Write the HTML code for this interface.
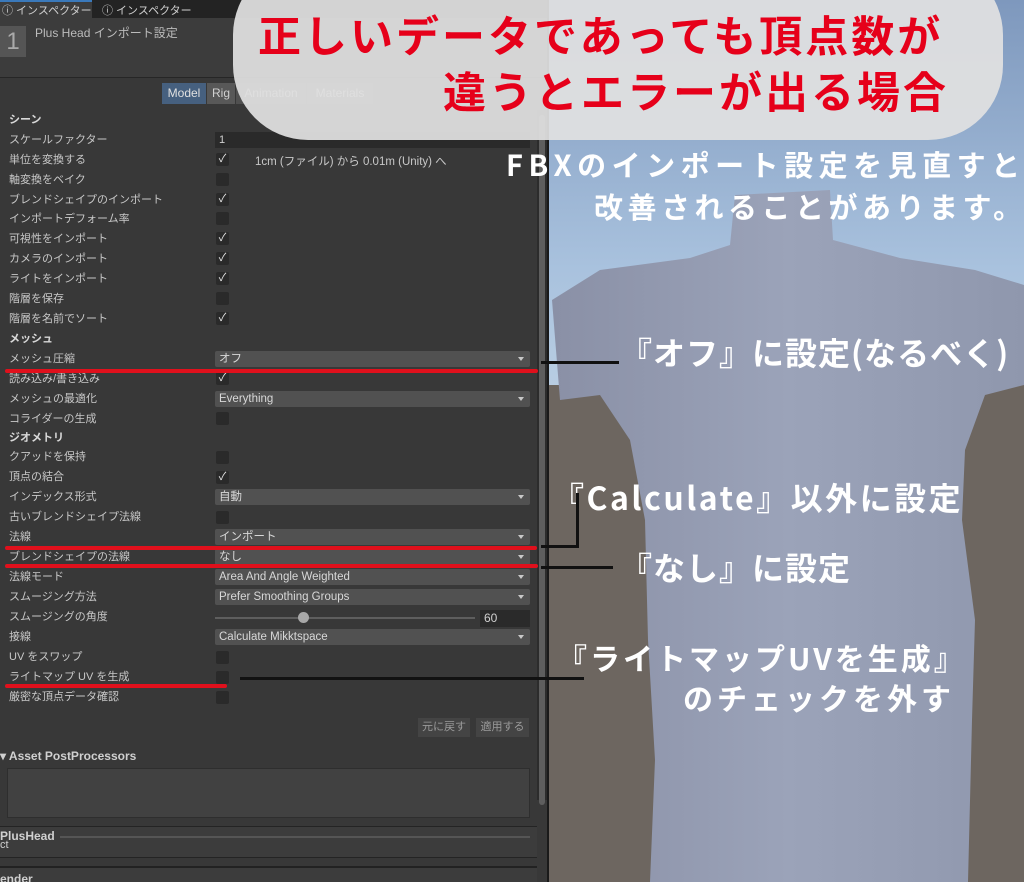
<!DOCTYPE html>
<html><head><meta charset="utf-8">
<style>
*{margin:0;padding:0;box-sizing:border-box}
body{width:1024px;height:882px;overflow:hidden;position:relative;background:#6d6660;font-family:"Liberation Sans","Noto Sans CJK JP",sans-serif}
.a{position:absolute}
#panel{left:0;top:0;width:548px;height:882px;background:#383838;overflow:hidden}
.lb{position:absolute;left:9px;font-size:11px;color:#c8c8c8;line-height:14px;white-space:nowrap}
.b{font-weight:bold;color:#d8d8d8}
.cb{position:absolute;left:216px;width:13px;height:13px;background:#2a2a2a;border-radius:2px;color:#e8e8e8;font-size:11px;line-height:13px;text-align:center}
.dd{position:absolute;left:215px;width:315px;height:16px;background:#515151;border-radius:2px;color:#d8d8d8;font-size:11.5px;line-height:16px;padding-left:4px}
.dd:after{content:"";position:absolute;right:6px;top:6px;border-left:3.5px solid transparent;border-right:3.5px solid transparent;border-top:4px solid #c8c8c8}
.red{position:absolute;height:4px;background:#e0101c;border-radius:2px}
.blk{position:absolute;background:#111}
.wt{position:absolute;color:#fff;font-family:"Noto Sans CJK JP",sans-serif;font-weight:bold;white-space:nowrap;letter-spacing:2px}
</style></head><body>

<svg class="a" style="left:0;top:0" width="1024" height="882">
<defs>
<linearGradient id="sky" x1="0" y1="0" x2="0" y2="1">
<stop offset="0" stop-color="#7e98bd"/><stop offset="0.7" stop-color="#a9c2de"/><stop offset="1" stop-color="#b8cde2"/></linearGradient>
<linearGradient id="bd" x1="0" y1="0" x2="1" y2="0">
<stop offset="0" stop-color="#8a90a6"/><stop offset="0.5" stop-color="#9ba3b9"/><stop offset="1" stop-color="#8f97ad"/></linearGradient>
</defs>
<rect x="548" y="0" width="476" height="385" fill="url(#sky)"/>
<rect x="548" y="385" width="476" height="497" fill="#6d6660"/>
<path d="M735 195 L830 190 L833 240 L900 258 L975 270 L1024 285 L1024 385 L985 395 L965 450 L962 520 L975 620 L972 720 L968 882 L650 882 L655 760 L648 640 L645 520 L630 440 L600 395 L560 400 L552 300 L600 270 L690 258 L730 245 Z" fill="url(#bd)"/>
</svg>

<div id="panel" class="a">
 <div class="a" style="left:0;top:0;width:548px;height:18px;background:#232323"></div>
 <div class="a" style="left:0;top:0;width:92px;height:18px;background:#3c3c3c;border-top:2px solid #3a79bb"></div>
 <div class="a" style="left:2px;top:2px;font-size:11px;color:#d0d0d0">ⓘ インスペクター</div>
 <div class="a" style="left:102px;top:2px;font-size:11px;color:#d0d0d0">ⓘ インスペクター</div>
 <div class="a" style="left:0;top:18px;width:548px;height:60px;background:#3c3c3c;border-bottom:1px solid #262626"></div>
 <div class="a" style="left:0;top:26px;width:26px;height:31px;background:#555;color:#aaa;font-size:24px;text-align:center;line-height:31px">1</div>
 <div class="a" style="left:35px;top:24px;font-size:12px;color:#bcbcbc">Plus Head インポート設定</div>
 <div class="a" style="left:162px;top:83px;width:44px;height:21px;background:#46607f;color:#e0e0e0;font-size:12px;line-height:21px;text-align:center">Model</div>
 <div class="a" style="left:207px;top:83px;width:28px;height:21px;background:#585858;color:#d0d0d0;font-size:12px;line-height:21px;text-align:center">Rig</div>
 <div class="a" style="left:236px;top:83px;width:70px;height:21px;background:#505050;color:#c0c0c0;font-size:12px;line-height:21px;text-align:center">Animation</div>
 <div class="a" style="left:307px;top:83px;width:66px;height:21px;background:#505050;color:#c0c0c0;font-size:12px;line-height:21px;text-align:center">Materials</div>

 <div class="lb b" style="top:113px">シーン</div>
 <div class="lb" style="top:133px">スケールファクター</div>
 <div class="a" style="left:215px;top:132px;width:315px;height:16px;background:#2a2a2a;color:#d0d0d0;font-size:11px;line-height:16px;padding-left:4px">1</div>
 <div class="lb" style="top:153px">単位を変換する</div><div class="cb" style="top:153px">✓</div>
 <div class="a" style="left:255px;top:153px;font-size:11.5px;color:#c8c8c8">1cm (ファイル) から 0.01m (Unity) へ</div>
 <div class="lb" style="top:173px">軸変換をベイク</div><div class="cb" style="top:173px"></div>
 <div class="lb" style="top:193px">ブレンドシェイプのインポート</div><div class="cb" style="top:193px">✓</div>
 <div class="lb" style="top:212px">インポートデフォーム率</div><div class="cb" style="top:212px"></div>
 <div class="lb" style="top:232px">可視性をインポート</div><div class="cb" style="top:232px">✓</div>
 <div class="lb" style="top:252px">カメラのインポート</div><div class="cb" style="top:252px">✓</div>
 <div class="lb" style="top:272px">ライトをインポート</div><div class="cb" style="top:272px">✓</div>
 <div class="lb" style="top:292px">階層を保存</div><div class="cb" style="top:292px"></div>
 <div class="lb" style="top:312px">階層を名前でソート</div><div class="cb" style="top:312px">✓</div>
 <div class="lb b" style="top:332px">メッシュ</div>
 <div class="lb" style="top:352px">メッシュ圧縮</div><div class="dd" style="top:351px">オフ</div>
 <div class="lb" style="top:372px">読み込み/書き込み</div><div class="cb" style="top:372px">✓</div>
 <div class="lb" style="top:392px">メッシュの最適化</div><div class="dd" style="top:391px">Everything</div>
 <div class="lb" style="top:412px">コライダーの生成</div><div class="cb" style="top:412px"></div>
 <div class="lb b" style="top:431px">ジオメトリ</div>
 <div class="lb" style="top:450px">クアッドを保持</div><div class="cb" style="top:451px"></div>
 <div class="lb" style="top:470px">頂点の結合</div><div class="cb" style="top:471px">✓</div>
 <div class="lb" style="top:490px">インデックス形式</div><div class="dd" style="top:489px">自動</div>
 <div class="lb" style="top:510px">古いブレンドシェイプ法線</div><div class="cb" style="top:511px"></div>
 <div class="lb" style="top:530px">法線</div><div class="dd" style="top:529px">インポート</div>
 <div class="lb" style="top:550px">ブレンドシェイプの法線</div><div class="dd" style="top:549px">なし</div>
 <div class="lb" style="top:570px">法線モード</div><div class="dd" style="top:569px">Area And Angle Weighted</div>
 <div class="lb" style="top:590px">スムージング方法</div><div class="dd" style="top:589px">Prefer Smoothing Groups</div>
 <div class="lb" style="top:610px">スムージングの角度</div>
 <div class="a" style="left:215px;top:617px;width:260px;height:2px;background:#5e5e5e"></div>
 <div class="a" style="left:298px;top:612px;width:11px;height:11px;border-radius:50%;background:#a8a8a8"></div>
 <div class="a" style="left:480px;top:610px;width:50px;height:17px;background:#2a2a2a;color:#d0d0d0;font-size:12px;line-height:17px;padding-left:4px">60</div>
 <div class="lb" style="top:630px">接線</div><div class="dd" style="top:629px">Calculate Mikktspace</div>
 <div class="lb" style="top:650px">UV をスワップ</div><div class="cb" style="top:651px"></div>
 <div class="lb" style="top:670px">ライトマップ UV を生成</div><div class="cb" style="top:671px"></div>
 <div class="lb" style="top:690px">厳密な頂点データ確認</div><div class="cb" style="top:691px"></div>
 <div class="a" style="left:418px;top:718px;width:52px;height:19px;background:#444;color:#9a9a9a;font-size:11px;line-height:19px;text-align:center">元に戻す</div>
 <div class="a" style="left:476px;top:718px;width:53px;height:19px;background:#444;color:#9a9a9a;font-size:11px;line-height:19px;text-align:center">適用する</div>
 <div class="a" style="left:0;top:749px;font-size:12px;color:#d0d0d0;font-weight:bold">▾ Asset PostProcessors</div>
 <div class="a" style="left:7px;top:768px;width:523px;height:50px;background:#414141;border:1px solid #2e2e2e"></div>
 <div class="a" style="left:0;top:826px;width:537px;height:32px;background:#3c3c3c;border-top:1px solid #242424;border-bottom:1px solid #242424"></div>
 <div class="a" style="left:0;top:829px;font-size:12px;color:#d0d0d0;font-weight:bold">PlusHead</div>
 <div class="a" style="left:0;top:839px;font-size:11px;color:#d0d0d0">ct</div>
 <div class="a" style="left:60px;top:836px;width:470px;height:2px;background:#555"></div>
 <div class="a" style="left:0;top:866px;width:537px;height:16px;background:#3c3c3c;border-top:2px solid #222"></div>
 <div class="a" style="left:0;top:872px;font-size:12px;color:#d0d0d0;font-weight:bold">ender</div>
 <div class="a" style="left:537px;top:110px;width:10px;height:690px;background:#2c2c2c"></div>
 <div class="a" style="left:539px;top:115px;width:6px;height:690px;border-radius:3px;background:#5e5e5e"></div>
</div>
<div class="a" style="left:547px;top:0;width:2px;height:882px;background:#1a1a1a"></div>

<div class="a" style="left:233px;top:-40px;width:770px;height:180px;border-radius:75px;background:rgba(225,225,225,0.93)"></div>
<div class="a" style="left:258px;top:6px;font-family:'Noto Sans CJK JP',sans-serif;font-weight:bold;font-size:43px;color:#e6001a;letter-spacing:3px;white-space:nowrap;line-height:56px">正しいデータであっても頂点数が</div>
<div class="a" style="left:443px;top:62px;font-family:'Noto Sans CJK JP',sans-serif;font-weight:bold;font-size:43px;color:#e6001a;letter-spacing:3px;white-space:nowrap;line-height:56px">違うとエラーが出る場合</div>

<div class="wt" style="left:506px;top:146px;font-size:29px;line-height:36px;letter-spacing:5.5px">FBXのインポート設定を見直すと</div>
<div class="wt" style="left:594px;top:188px;font-size:29px;line-height:36px;letter-spacing:4.5px">改善されることがあります。</div>

<div class="wt" style="left:620px;top:332px;font-size:32px;line-height:40px;letter-spacing:1px">『オフ』に設定(なるべく)</div>
<div class="wt" style="left:552px;top:477px;font-size:32px;line-height:40px;letter-spacing:2.5px">『Calculate』以外に設定</div>
<div class="wt" style="left:620px;top:547px;font-size:32px;line-height:40px;letter-spacing:1px">『なし』に設定</div>
<div class="wt" style="left:557px;top:637px;font-size:30px;line-height:40px;letter-spacing:3px">『ライトマップUVを生成』</div>
<div class="wt" style="left:683px;top:677px;font-size:30px;line-height:40px;letter-spacing:4px">のチェックを外す</div>

<div class="red" style="left:5px;top:369px;width:533px"></div>
<div class="red" style="left:5px;top:546px;width:532px"></div>
<div class="red" style="left:5px;top:564px;width:533px"></div>
<div class="red" style="left:5px;top:684px;width:222px"></div>

<div class="blk" style="left:541px;top:361px;width:78px;height:3px"></div>
<div class="blk" style="left:576px;top:493px;width:3px;height:54px"></div>
<div class="blk" style="left:541px;top:545px;width:38px;height:3px"></div>
<div class="blk" style="left:541px;top:566px;width:72px;height:3px"></div>
<div class="blk" style="left:240px;top:677px;width:344px;height:3px"></div>
</body></html>
